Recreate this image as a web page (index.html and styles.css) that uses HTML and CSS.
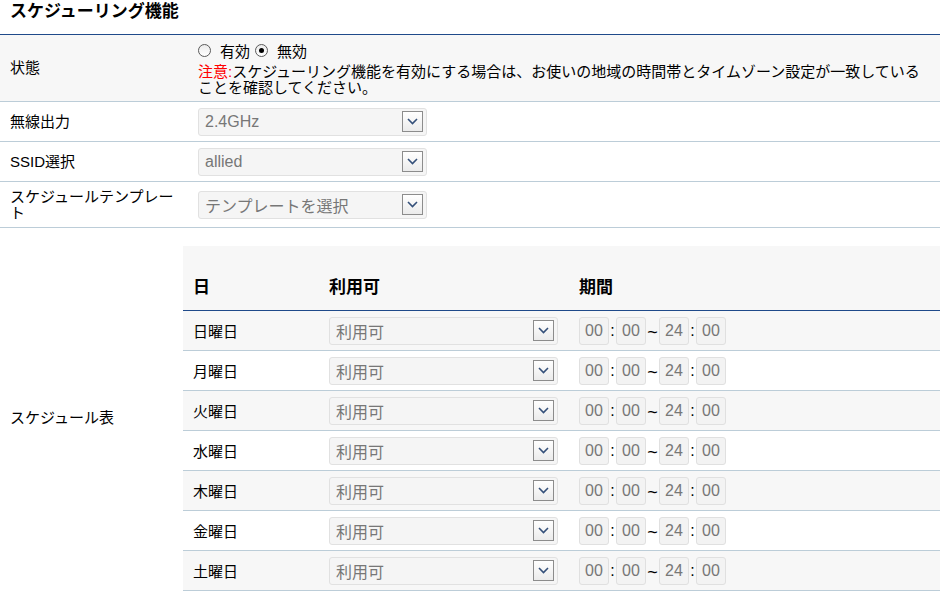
FILE: index.html
```html
<!DOCTYPE html>
<html lang="ja">
<head>
<meta charset="utf-8">
<title>スケジューリング機能</title>
<link rel="stylesheet" href="styles.css">
</head>
<body>
<h1 class="title">スケジューリング機能</h1>
<div class="form">
  <div class="row row-status">
    <div class="label">状態</div>
    <div class="value value-status">
      <div class="radios">
        <span class="radio"></span><span class="rlabel">有効</span>
        <span class="radio checked"></span><span class="rlabel">無効</span>
      </div>
      <div class="note"><span class="warn">注意:</span>スケジューリング機能を有効にする場合は、お使いの地域の時間帯とタイムゾーン設定が一致している<br>ことを確認してください。</div>
    </div>
  </div>
  <div class="row row-40">
    <div class="label">無線出力</div>
    <div class="value">
      <div class="select"><span class="stext">2.4GHz</span><span class="arrow"><svg width="11" height="7" viewBox="0 0 11 7"><path d="M1 1 L5.5 5.5 L10 1" fill="none" stroke="#34507a" stroke-width="1.6"/></svg></span></div>
    </div>
  </div>
  <div class="row row-40">
    <div class="label">SSID選択</div>
    <div class="value">
      <div class="select"><span class="stext">allied</span><span class="arrow"><svg width="11" height="7" viewBox="0 0 11 7"><path d="M1 1 L5.5 5.5 L10 1" fill="none" stroke="#34507a" stroke-width="1.6"/></svg></span></div>
    </div>
  </div>
  <div class="row row-46">
    <div class="label">スケジュールテンプレート</div>
    <div class="value">
      <div class="select"><span class="stext">テンプレートを選択</span><span class="arrow"><svg width="11" height="7" viewBox="0 0 11 7"><path d="M1 1 L5.5 5.5 L10 1" fill="none" stroke="#34507a" stroke-width="1.6"/></svg></span></div>
    </div>
  </div>
  <div class="row row-sched">
    <div class="label label-sched">スケジュール表</div>
    <div class="sched-wrap">
      <div class="sched-head">
        <div class="c1">日</div>
        <div>利用可</div>
        <div>期間</div>
      </div>
      <div class="sched-body">
        <div class="sched-row">
          <div class="c1">日曜日</div>
          <div><div class="select"><span class="stext">利用可</span><span class="arrow"><svg width="11" height="7" viewBox="0 0 11 7"><path d="M1 1 L5.5 5.5 L10 1" fill="none" stroke="#34507a" stroke-width="1.6"/></svg></span></div></div>
          <div class="times"><span class="tbox">00</span><span class="sep">:</span><span class="tbox">00</span><span class="tilde">~</span><span class="tbox">24</span><span class="sep">:</span><span class="tbox">00</span></div>
        </div>
        <div class="sched-row">
          <div class="c1">月曜日</div>
          <div><div class="select"><span class="stext">利用可</span><span class="arrow"><svg width="11" height="7" viewBox="0 0 11 7"><path d="M1 1 L5.5 5.5 L10 1" fill="none" stroke="#34507a" stroke-width="1.6"/></svg></span></div></div>
          <div class="times"><span class="tbox">00</span><span class="sep">:</span><span class="tbox">00</span><span class="tilde">~</span><span class="tbox">24</span><span class="sep">:</span><span class="tbox">00</span></div>
        </div>
        <div class="sched-row">
          <div class="c1">火曜日</div>
          <div><div class="select"><span class="stext">利用可</span><span class="arrow"><svg width="11" height="7" viewBox="0 0 11 7"><path d="M1 1 L5.5 5.5 L10 1" fill="none" stroke="#34507a" stroke-width="1.6"/></svg></span></div></div>
          <div class="times"><span class="tbox">00</span><span class="sep">:</span><span class="tbox">00</span><span class="tilde">~</span><span class="tbox">24</span><span class="sep">:</span><span class="tbox">00</span></div>
        </div>
        <div class="sched-row">
          <div class="c1">水曜日</div>
          <div><div class="select"><span class="stext">利用可</span><span class="arrow"><svg width="11" height="7" viewBox="0 0 11 7"><path d="M1 1 L5.5 5.5 L10 1" fill="none" stroke="#34507a" stroke-width="1.6"/></svg></span></div></div>
          <div class="times"><span class="tbox">00</span><span class="sep">:</span><span class="tbox">00</span><span class="tilde">~</span><span class="tbox">24</span><span class="sep">:</span><span class="tbox">00</span></div>
        </div>
        <div class="sched-row">
          <div class="c1">木曜日</div>
          <div><div class="select"><span class="stext">利用可</span><span class="arrow"><svg width="11" height="7" viewBox="0 0 11 7"><path d="M1 1 L5.5 5.5 L10 1" fill="none" stroke="#34507a" stroke-width="1.6"/></svg></span></div></div>
          <div class="times"><span class="tbox">00</span><span class="sep">:</span><span class="tbox">00</span><span class="tilde">~</span><span class="tbox">24</span><span class="sep">:</span><span class="tbox">00</span></div>
        </div>
        <div class="sched-row">
          <div class="c1">金曜日</div>
          <div><div class="select"><span class="stext">利用可</span><span class="arrow"><svg width="11" height="7" viewBox="0 0 11 7"><path d="M1 1 L5.5 5.5 L10 1" fill="none" stroke="#34507a" stroke-width="1.6"/></svg></span></div></div>
          <div class="times"><span class="tbox">00</span><span class="sep">:</span><span class="tbox">00</span><span class="tilde">~</span><span class="tbox">24</span><span class="sep">:</span><span class="tbox">00</span></div>
        </div>
        <div class="sched-row">
          <div class="c1">土曜日</div>
          <div><div class="select"><span class="stext">利用可</span><span class="arrow"><svg width="11" height="7" viewBox="0 0 11 7"><path d="M1 1 L5.5 5.5 L10 1" fill="none" stroke="#34507a" stroke-width="1.6"/></svg></span></div></div>
          <div class="times"><span class="tbox">00</span><span class="sep">:</span><span class="tbox">00</span><span class="tilde">~</span><span class="tbox">24</span><span class="sep">:</span><span class="tbox">00</span></div>
        </div>
      </div>
    </div>
  </div>
</div>
</body>
</html>
```
FILE: styles.css
```css
* { box-sizing: border-box; }
body {
  margin: 0;
  font-family: "Liberation Sans", "Noto Sans CJK JP", sans-serif;
  font-size: 15px;
  color: #000;
  background: #fff;
}
.title {
  margin: 0;
  height: 35px;
  padding: 2px 0 0 10px;
  font-size: 17px;
  font-weight: bold;
  line-height: 20px;
  border-bottom: 1px solid #1f4a8a;
}
.row {
  display: flex;
  border-bottom: 1px solid #bccdd8;
}
.label {
  width: 198px;
  flex-shrink: 0;
  padding: 0 18px 0 10px;
  display: flex;
  align-items: center;
  line-height: 16px;
}
.value {
  flex: 1;
  display: flex;
  align-items: center;
}
.row-status {
  background: #f7f7f7;
  height: 67px;
}
.value-status {
  flex-direction: column;
  align-items: flex-start;
  justify-content: flex-start;
  padding-top: 6px;
}
.radios {
  height: 18px;
  display: flex;
  align-items: center;
}
.radio {
  width: 13px;
  height: 13px;
  border-radius: 50%;
  border: 1px solid #5a5a5a;
  background: linear-gradient(#ececec, #ffffff);
  position: relative;
  margin-right: 9px;
}
.radio.checked::after {
  content: "";
  position: absolute;
  left: 3px;
  top: 3px;
  width: 5px;
  height: 5px;
  border-radius: 50%;
  background: #000;
}
.rlabel {
  margin-right: 5px;
}
.note {
  margin-top: 5px;
  line-height: 16px;
}
.warn { color: #f00; }
.row-40 { height: 40px; }
.row-46 { height: 46px; }
.select {
  width: 229px;
  height: 28px;
  background: #f5f5f5;
  border: 1px solid #e1e1e1;
  border-radius: 3px;
  display: flex;
  align-items: center;
  justify-content: space-between;
  padding: 0 3px 0 6px;
  color: #777;
  font-size: 16px;
}
.arrow {
  width: 21px;
  height: 21px;
  border: 1px solid #8c8c8c;
  background: linear-gradient(#ffffff, #ebebeb);
  display: flex;
  align-items: center;
  justify-content: center;
}
.arrow svg { display: block; }
.row-sched { border-bottom: none; }
.label-sched { width: 183px; padding-top: 0; }
.sched-wrap {
  flex: 1;
  padding: 18px 0 16px;
}
.sched-head {
  display: grid;
  grid-template-columns: 146px 250px 1fr;
  height: 65px;
  padding-top: 14px;
  align-items: center;
  background: #f7f7f7;
  border-bottom: 1px solid #1f4a8a;
  font-weight: bold;
  font-size: 17px;
}
.c1 { padding-left: 10px; }
.sched-row {
  display: grid;
  grid-template-columns: 146px 250px 1fr;
  height: 40px;
  align-items: center;
  border-bottom: 1px solid #bccdd8;
}
.sched-row:nth-child(odd) { background: #f7f7f7; }
.times {
  display: flex;
  align-items: center;
}
.tbox {
  width: 30px;
  height: 28px;
  border: 1px solid #e0e0e0;
  border-radius: 3px;
  background: #f3f3f3;
  color: #777;
  font-size: 16px;
  display: flex;
  align-items: center;
  justify-content: center;
}
.sep {
  width: 7px;
  text-align: center;
  font-size: 16px;
}
.tilde {
  width: 13px;
  text-align: center;
  font-size: 18px;
  line-height: 18px;
  padding-top: 2px;
}
```
